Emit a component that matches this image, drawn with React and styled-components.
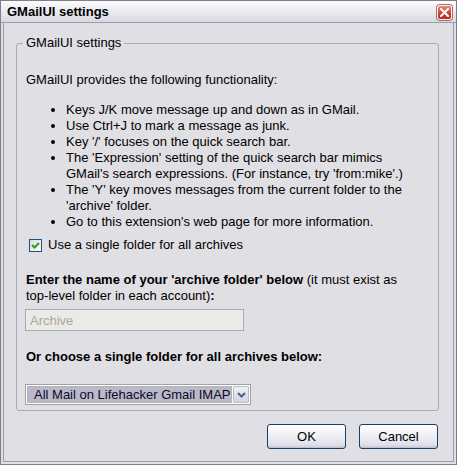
import React from "react";
import styled, { createGlobalStyle } from "styled-components";

const Global = createGlobalStyle`
  html, body { margin: 0; padding: 0; background: #e0dfe3; }
  * { box-sizing: border-box; }
`;

const Frame = styled.div`
  width: 457px;
  height: 465px;
  border: 1px solid #7e7e8e;
  background: #e0dfe3;
  display: flex;
  flex-direction: column;
  font-family: "Liberation Sans", Arial, sans-serif;
  font-size: 13px;
  color: #000;
`;

const TitleBar = styled.div`
  height: 22px;
  flex: none;
  display: flex;
  align-items: center;
  justify-content: space-between;
  padding: 0 3px 0 6px;
  background: linear-gradient(#fdfdfe 0%, #ececf1 45%, #d9d9e2 100%);
  border-bottom: 1px solid #9e9eae;
`;

const Title = styled.span`
  font-weight: bold;
  font-size: 13px;
  line-height: 16px;
`;

const CloseButton = styled.div`
  width: 15px;
  height: 15px;
  border-radius: 3px;
  border: 1px solid #f4f4f4;
  background: linear-gradient(#e88a78, #c4402c 60%, #b8301e);
  box-shadow: 0 0 0 1px #b06a62;
  display: flex;
  align-items: center;
  justify-content: center;
  margin-top: 2px;
  margin-right: 1px;
`;

const Client = styled.div`
  flex: 1;
  margin: 0 2px 2px 2px;
  border: 1px solid #9a9aaa;
  border-top: none;
  padding: 12px 14px 0 12px;
  display: flex;
  flex-direction: column;
`;

const Group = styled.fieldset`
  margin: 0;
  padding: 21px 9px 5px 9px;
  border: 1px solid #aaaab2;
  border-radius: 3px;
  min-width: 0;
`;

const Legend = styled.legend`
  padding: 0 3px;
  margin-left: -3px;
  line-height: 16px;
  font-size: 13px;
`;

const Para = styled.div`
  line-height: 16px;
`;

const List = styled.ul`
  margin: 14px 0 0 0;
  padding: 0 6px 0 40px;
  line-height: 16px;
`;

const CheckRow = styled.label`
  display: flex;
  align-items: center;
  gap: 6px;
  margin: 7px 0 0 3px;
  line-height: 16px;
`;

const CheckBox = styled.span`
  width: 13px;
  height: 13px;
  border: 1px solid #1c5180;
  background: linear-gradient(135deg, #dcdcd7, #ffffff);
  display: flex;
  align-items: center;
  justify-content: center;
`;

const Heading = styled.div`
  margin-top: ${(p) => p.$gap}px;
  line-height: 16px;
`;

const NoWrap = styled.span`
  white-space: nowrap;
`;

const TextInput = styled.div`
  margin: 5px 0 0 -1px;
  width: 219px;
  height: 22px;
  border: 1px solid #a5acb2;
  background: #ebeae6;
  color: #aca899;
  padding-left: 4px;
  display: flex;
  align-items: center;
`;

const Select = styled.div`
  margin: 19px 0 0 -1px;
  width: 226px;
  height: 21px;
  border: 1px solid #a0a0a8;
  background: #fff;
  display: flex;
  padding: 1px;
`;

const SelectValue = styled.div`
  flex: 1;
  background: #b9b9cb;
  border: 1px dotted #b8b08a;
  padding-left: 6px;
  display: flex;
  align-items: center;
  color: #0a0a20;
  white-space: nowrap;
  overflow: hidden;
`;

const DropButton = styled.div`
  width: 16px;
  margin-left: 1px;
  border: 1px solid #b8bcc8;
  border-radius: 1px;
  background: linear-gradient(#eef0f6, #d2d6e2);
  display: flex;
  align-items: center;
  justify-content: center;
`;

const ButtonRow = styled.div`
  display: flex;
  justify-content: flex-end;
  gap: 13px;
  margin: 13px 1px 0 0;
`;

const Button = styled.button`
  width: 79px;
  height: 25px;
  border: 1px solid #1f3a6e;
  border-radius: 3px;
  background: linear-gradient(#ffffff 0%, #f2f2f6 40%, #e0e0ea 85%, #c9cad8 100%);
  box-shadow: inset 0 -1px 0 #c0c2d4;
  font-family: "Liberation Sans", Arial, sans-serif;
  font-size: 13px;
  color: #000;
  padding: 0;
`;

export default function App() {
  return (
    <>
      <Global />
      <Frame>
        <TitleBar>
          <Title>GMailUI settings</Title>
          <CloseButton>
            <svg width="9" height="9" viewBox="0 0 9 9">
              <path d="M1 1 L8 8 M8 1 L1 8" stroke="#fff" strokeWidth="2" strokeLinecap="square" />
            </svg>
          </CloseButton>
        </TitleBar>
        <Client>
          <Group>
            <Legend>GMailUI settings</Legend>
            <Para>GMailUI provides the following functionality:</Para>
            <List>
              <li>Keys J/K move message up and down as in GMail.</li>
              <li>Use Ctrl+J to mark a message as junk.</li>
              <li>Key '/' focuses on the quick search bar.</li>
              <li>The 'Expression' setting of the quick search bar mimics GMail's search expressions. (For instance, try 'from:mike'.)</li>
              <li>The 'Y' key moves messages from the current folder to the 'archive' folder.</li>
              <li>Go to this extension's web page for more information.</li>
            </List>
            <CheckRow>
              <CheckBox>
                <svg width="9" height="9" viewBox="0 0 9 9">
                  <path d="M1 4 L3.5 6.5 L8 2" fill="none" stroke="#21a121" strokeWidth="2" />
                </svg>
              </CheckBox>
              Use a single folder for all archives
            </CheckRow>
            <Heading $gap={19}>
              <b>Enter the name of your 'archive folder' below</b> (it must exist as <NoWrap>top-level</NoWrap> folder in each account)<b>:</b>
            </Heading>
            <TextInput>Archive</TextInput>
            <Heading $gap={18}>
              <b>Or choose a single folder for all archives below:</b>
            </Heading>
            <Select>
              <SelectValue>All Mail on Lifehacker Gmail IMAP</SelectValue>
              <DropButton>
                <svg width="9" height="6" viewBox="0 0 9 6">
                  <path d="M1 1 L4.5 4.5 L8 1" fill="none" stroke="#4d6185" strokeWidth="2" />
                </svg>
              </DropButton>
            </Select>
          </Group>
          <ButtonRow>
            <Button>OK</Button>
            <Button>Cancel</Button>
          </ButtonRow>
        </Client>
      </Frame>
    </>
  );
}
